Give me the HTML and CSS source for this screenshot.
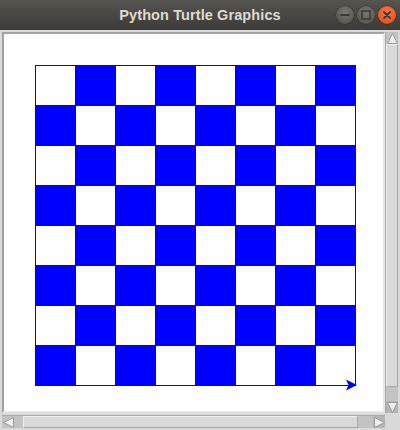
FILE: index.html
```html
<!DOCTYPE html>
<html>
<head>
<meta charset="utf-8">
<title>Python Turtle Graphics</title>
<link rel="stylesheet" href="styles.css">
</head>
<body>
<div class="window">
  <div class="titlebar">
    <span class="title">Python Turtle Graphics</span>
    <div class="controls">
      <span class="btn btn-min"><svg width="18" height="18" viewBox="0 0 18 18"><rect x="4.5" y="8" width="9" height="2" fill="#3a3935"/></svg></span>
      <span class="btn btn-max"><svg width="18" height="18" viewBox="0 0 18 18"><rect x="5" y="5" width="8" height="8" fill="none" stroke="#3a3935" stroke-width="1.5"/></svg></span>
      <span class="btn btn-close"><svg width="18" height="18" viewBox="0 0 18 18"><path d="M6 6 L12 12 M12 6 L6 12" stroke="#3a3935" stroke-width="1.8" stroke-linecap="round"/></svg></span>
    </div>
  </div>
  <div class="client">
    <div class="canvas-frame">
      <svg class="board" width="379" height="377" viewBox="4 34 379 377" shape-rendering="crispEdges">
        <g fill="#0000ff" id="squares"></g>
        <rect x="35.5" y="65.5" width="320" height="320" fill="none" stroke="#0000ff" stroke-width="1"/>
        <polygon points="357,385 346,379.5 348.5,385 346,390.5" fill="#0000ff" shape-rendering="auto"/>
      </svg>
    </div>
    <div class="vscroll">
      <div class="arrow arrow-up"><svg width="11" height="11" viewBox="0 0 11 11"><polygon points="5.5,0.5 10.5,10.5 0.5,10.5" fill="#ededed" stroke="#9a9a9a" stroke-width="1"/></svg></div>
      <div class="slider vslider"></div>
      <div class="trough-fill"></div>
      <div class="arrow arrow-down"><svg width="11" height="11" viewBox="0 0 11 11"><polygon points="0.5,0.5 10.5,0.5 5.5,10.5" fill="#ededed" stroke="#9a9a9a" stroke-width="1"/></svg></div>
    </div>
    <div class="hscroll">
      <div class="arrow arrow-left"><svg width="11" height="11" viewBox="0 0 11 11"><polygon points="0.5,5.5 10.5,0.5 10.5,10.5" fill="#ededed" stroke="#9a9a9a" stroke-width="1"/></svg></div>
      <div class="trough-gap-left"></div>
      <div class="slider hslider"></div>
      <div class="trough-fill"></div>
      <div class="arrow arrow-right"><svg width="11" height="11" viewBox="0 0 11 11"><polygon points="0.5,0.5 10.5,5.5 0.5,10.5" fill="#ededed" stroke="#9a9a9a" stroke-width="1"/></svg></div>
    </div>
    <div class="corner"></div>
  </div>
</div>
<script src="board.js"></script>
</body>
</html>
```
FILE: board.js
```js
(function () {
  var g = document.getElementById('squares');
  var ns = 'http://www.w3.org/2000/svg';
  for (var r = 0; r < 8; r++) {
    for (var c = 0; c < 8; c++) {
      if ((r + c) % 2 === 1) {
        var rect = document.createElementNS(ns, 'rect');
        rect.setAttribute('x', 35 + c * 40);
        rect.setAttribute('y', 65 + r * 40);
        rect.setAttribute('width', 41);
        rect.setAttribute('height', 41);
        g.appendChild(rect);
      }
    }
  }
})();
```
FILE: styles.css
```css
html, body {
  margin: 0;
  padding: 0;
}
body {
  width: 400px;
  height: 430px;
  overflow: hidden;
  background: #d9d9d9;
}
.window {
  width: 400px;
  height: 430px;
  display: flex;
  flex-direction: column;
}
.titlebar {
  height: 30px;
  flex: none;
  background: linear-gradient(#56544f, #3c3b37);
  position: relative;
  display: flex;
  align-items: center;
  justify-content: center;
}
.title {
  font-family: "Liberation Sans", Arial, sans-serif;
  font-weight: bold;
  font-size: 14.5px;
  color: #dfdbd2;
  letter-spacing: 0.1px;
  margin-left: 0px;
}
.controls {
  position: absolute;
  right: 4px;
  top: 6px;
  display: flex;
  gap: 3px;
}
.btn {
  width: 18px;
  height: 18px;
  border-radius: 50%;
  display: block;
  box-sizing: border-box;
}
.btn svg { display: block; }
.btn-min, .btn-max {
  background: radial-gradient(circle at 50% 35%, #7a7873, #5a5954 70%, #4a4945);
  box-shadow: 0 0 0 0.5px #2e2d2a;
}
.btn-close {
  background: radial-gradient(circle at 50% 35%, #f47a48, #e95420 70%, #d4481a);
  box-shadow: 0 0 0 0.5px #3a2a20;
}
.client {
  flex: 1;
  display: grid;
  grid-template-columns: 383px 13px;
  grid-template-rows: 381px 15px;
  padding: 2px;
  background: #d9d9d9;
}
.canvas-frame {
  box-sizing: border-box;
  height: 381px;
  border-style: solid;
  border-width: 2px;
  border-color: #a3a3a3 #e6e6e6 #e6e6e6 #a3a3a3;
  background: #ffffff;
  overflow: hidden;
}
.board { display: block; }
.vscroll {
  display: flex;
  flex-direction: column;
  background: #c3c3c3;
  border-left: 1px solid #a8a8a8;
  box-sizing: border-box;
}
.hscroll {
  display: flex;
  flex-direction: row;
  background: #c3c3c3;
  border-top: 1px solid #a8a8a8;
  box-sizing: border-box;
  margin-top: 2px;
}
.arrow {
  flex: none;
  display: flex;
  align-items: center;
  justify-content: center;
  background: #c3c3c3;
}
.arrow-up, .arrow-down { height: 12px; }
.arrow-left, .arrow-right { width: 12px; }
.arrow-down, .arrow-right { background: #b5b5b5; }
.slider {
  background: #d9d9d9;
  box-sizing: border-box;
  border-style: solid;
  border-width: 1px;
  border-color: #efefef #a6a6a6 #a6a6a6 #efefef;
}
.vslider { height: 343px; flex: none; }
.hslider { width: 335px; flex: none; }
.trough-gap-left { width: 9px; flex: none; }
.trough-fill { flex: 1; }
.corner { background: #d9d9d9; }
```
